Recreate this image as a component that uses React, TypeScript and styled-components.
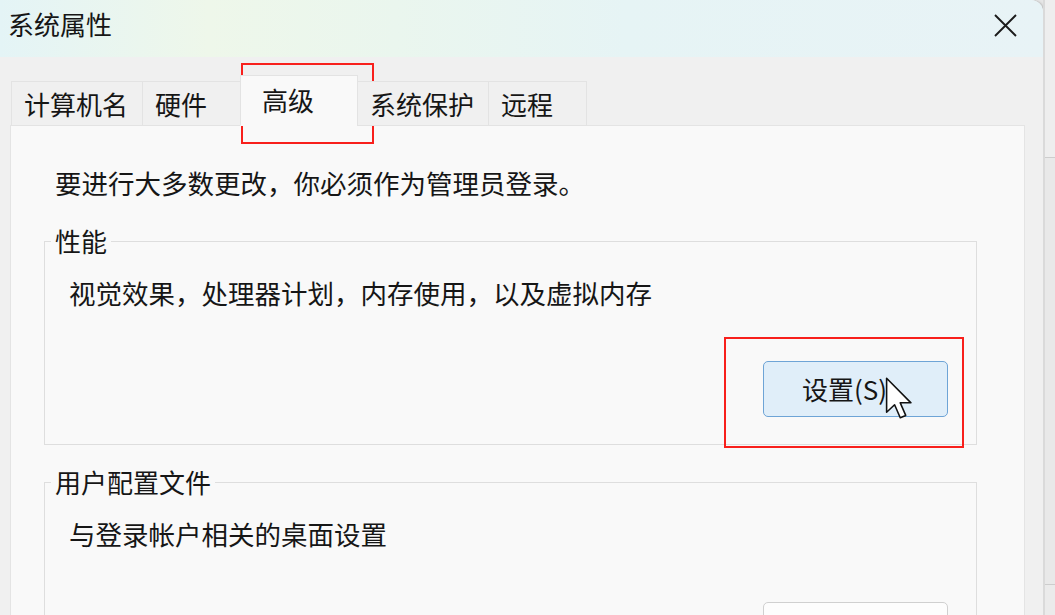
import styled, { createGlobalStyle } from "styled-components";

const GlobalStyle = createGlobalStyle`
  html, body {
    margin: 0;
    padding: 0;
    overflow: hidden;
    background: #e6e6e6;
  }
  body {
    font-family: "Noto Sans CJK SC", "Noto Sans", sans-serif;
    color: #161616;
  }
`;

const Screen = styled.div`
  position: relative;
  display: flex;
  width: 1055px;
  height: 615px;
  overflow: hidden;
`;

const Window = styled.div`
  width: 1043px;
  height: 660px;
  flex-shrink: 0;
  display: flex;
  flex-direction: column;
  background: #f0f0f0;
  border-top-right-radius: 12px;
  box-shadow: 1px 0 0 #c4c4c4, 2px 0 2px rgba(0, 0, 0, 0.12);
  overflow: hidden;
`;

const Backdrop = styled.div`
  flex: 1;
  display: flex;
  flex-direction: column;
  background: #ebebeb;
  border-left: 2px solid #dadada;
`;

const BackdropBand = styled.div<{ $h: number; $tone: string }>`
  height: ${(p) => p.$h}px;
  background: ${(p) => p.$tone};
  border-bottom: 1px solid #cdcdcd;
`;

const TitleBar = styled.div`
  height: 57px;
  flex-shrink: 0;
  display: flex;
  align-items: flex-start;
  justify-content: space-between;
  padding: 6px 26px 0 8px;
  box-sizing: border-box;
  background: linear-gradient(
    90deg,
    #e4f4f6 0%,
    #eef7ea 20%,
    #eaf6ee 38%,
    #e6f4f5 60%,
    #e8f3f6 100%
  );
`;

const Title = styled.div`
  font-size: 26px;
  line-height: 36px;
`;

const CloseButton = styled.div`
  margin-top: 8px;
  width: 23px;
  height: 23px;
  display: flex;
`;

const Body = styled.div`
  flex: 1;
  display: flex;
  flex-direction: column;
  padding: 18px 18px 0 10px;
`;

const TabStrip = styled.div`
  display: flex;
  align-items: flex-end;
  margin-left: 2px;
  position: relative;
  z-index: 1;
  margin-bottom: -1px;
`;

const Tab = styled.div<{ $active?: boolean }>`
  box-sizing: border-box;
  display: flex;
  align-items: center;
  font-size: 26px;
  line-height: 36px;
  white-space: nowrap;
  min-width: ${(p) => (p.$active ? "118px" : "99px")};
  height: ${(p) => (p.$active ? "51px" : "45px")};
  padding: ${(p) => (p.$active ? "0 20px 2px 21px" : "0 14px 0 12px")};
  background: ${(p) => (p.$active ? "#f9f9f9" : "#f0f0f0")};
  border: 1px solid #e3e3e3;
  border-bottom: ${(p) => (p.$active ? "1px solid #f9f9f9" : "1px solid #e3e3e3")};
  margin-left: -1px;
`;

const Panel = styled.div`
  flex: 1;
  background: #f9f9f9;
  border: 1px solid #e4e4e4;
  padding: 39px 47px 0 33px;
  display: flex;
  flex-direction: column;
`;

const Notice = styled.div`
  font-size: 26.5px;
  line-height: 36px;
  padding-left: 11px;
  margin-bottom: 22px;
`;

const Group = styled.fieldset<{ $gap?: number }>`
  margin: ${(p) => p.$gap ?? 0}px 0 0 0;
  padding: 0 28px 27px 6px;
  border: 1px solid #dedede;
  min-inline-size: 0;
`;

const GroupTitle = styled.legend`
  font-size: 26px;
  line-height: 36px;
  padding: 0 4px;
`;

const GroupText = styled.div`
  font-size: 26.5px;
  line-height: 36px;
  padding: 16px 0 0 18px;
`;

const ButtonRow = styled.div`
  display: flex;
  justify-content: flex-end;
  margin-top: 50px;
`;

const ActionButton = styled.div<{ $primary?: boolean }>`
  box-sizing: border-box;
  width: 185px;
  height: 56px;
  display: flex;
  align-items: center;
  justify-content: center;
  padding-right: 22px;
  font-size: 26px;
  line-height: 36px;
  border-radius: 5px;
  background: ${(p) => (p.$primary ? "#e0eef9" : "#fdfdfd")};
  border: 1px solid ${(p) => (p.$primary ? "#6ea4d6" : "#d0d0d0")};
`;

const Highlight = styled.div<{ $x: number; $y: number; $w: number; $h: number }>`
  position: absolute;
  left: ${(p) => p.$x}px;
  top: ${(p) => p.$y}px;
  width: ${(p) => p.$w}px;
  height: ${(p) => p.$h}px;
  box-sizing: border-box;
  border: 2px solid #f8201c;
  pointer-events: none;
`;

const Pointer = styled.svg`
  position: absolute;
  left: 885px;
  top: 377px;
  width: 28px;
  height: 42px;
`;

const tabs = ["计算机名", "硬件", "高级", "系统保护", "远程"];

export default function App() {
  return (
    <>
      <GlobalStyle />
      <Screen>
        <Window>
          <TitleBar>
            <Title>系统属性</Title>
            <CloseButton>
              <svg width="23" height="23" viewBox="0 0 23 23">
                <path d="M1 1 L22 22 M22 1 L1 22" stroke="#1b1b1b" strokeWidth="1.9" fill="none" />
              </svg>
            </CloseButton>
          </TitleBar>
          <Body>
            <TabStrip>
              {tabs.map((t) => (
                <Tab key={t} $active={t === "高级"}>
                  {t}
                </Tab>
              ))}
            </TabStrip>
            <Panel>
              <Notice>要进行大多数更改，你必须作为管理员登录。</Notice>
              <Group>
                <GroupTitle>性能</GroupTitle>
                <GroupText>视觉效果，处理器计划，内存使用，以及虚拟内存</GroupText>
                <ButtonRow>
                  <ActionButton $primary>设置(S)</ActionButton>
                </ButtonRow>
              </Group>
              <Group $gap={19}>
                <GroupTitle>用户配置文件</GroupTitle>
                <GroupText>与登录帐户相关的桌面设置</GroupText>
                <ButtonRow>
                  <ActionButton>设置(E)</ActionButton>
                </ButtonRow>
              </Group>
            </Panel>
          </Body>
        </Window>
        <Backdrop>
          <BackdropBand $h={157} $tone="#eeeeee" />
          <BackdropBand $h={426} $tone="#e9e9e9" />
        </Backdrop>
        <Highlight $x={241} $y={63} $w={133} $h={81} />
        <Highlight $x={724} $y={337} $w={240} $h={111} />
        <Pointer viewBox="0 0 13 20">
          <path
            d="M0.6 0.6 L0.6 16.8 L4.4 13.2 L7.1 19.4 L9.7 18.3 L7.1 12.3 L12.2 12.3 Z"
            fill="#ffffff"
            stroke="#111111"
            strokeWidth="0.75"
            strokeLinejoin="round"
          />
        </Pointer>
      </Screen>
    </>
  );
}
